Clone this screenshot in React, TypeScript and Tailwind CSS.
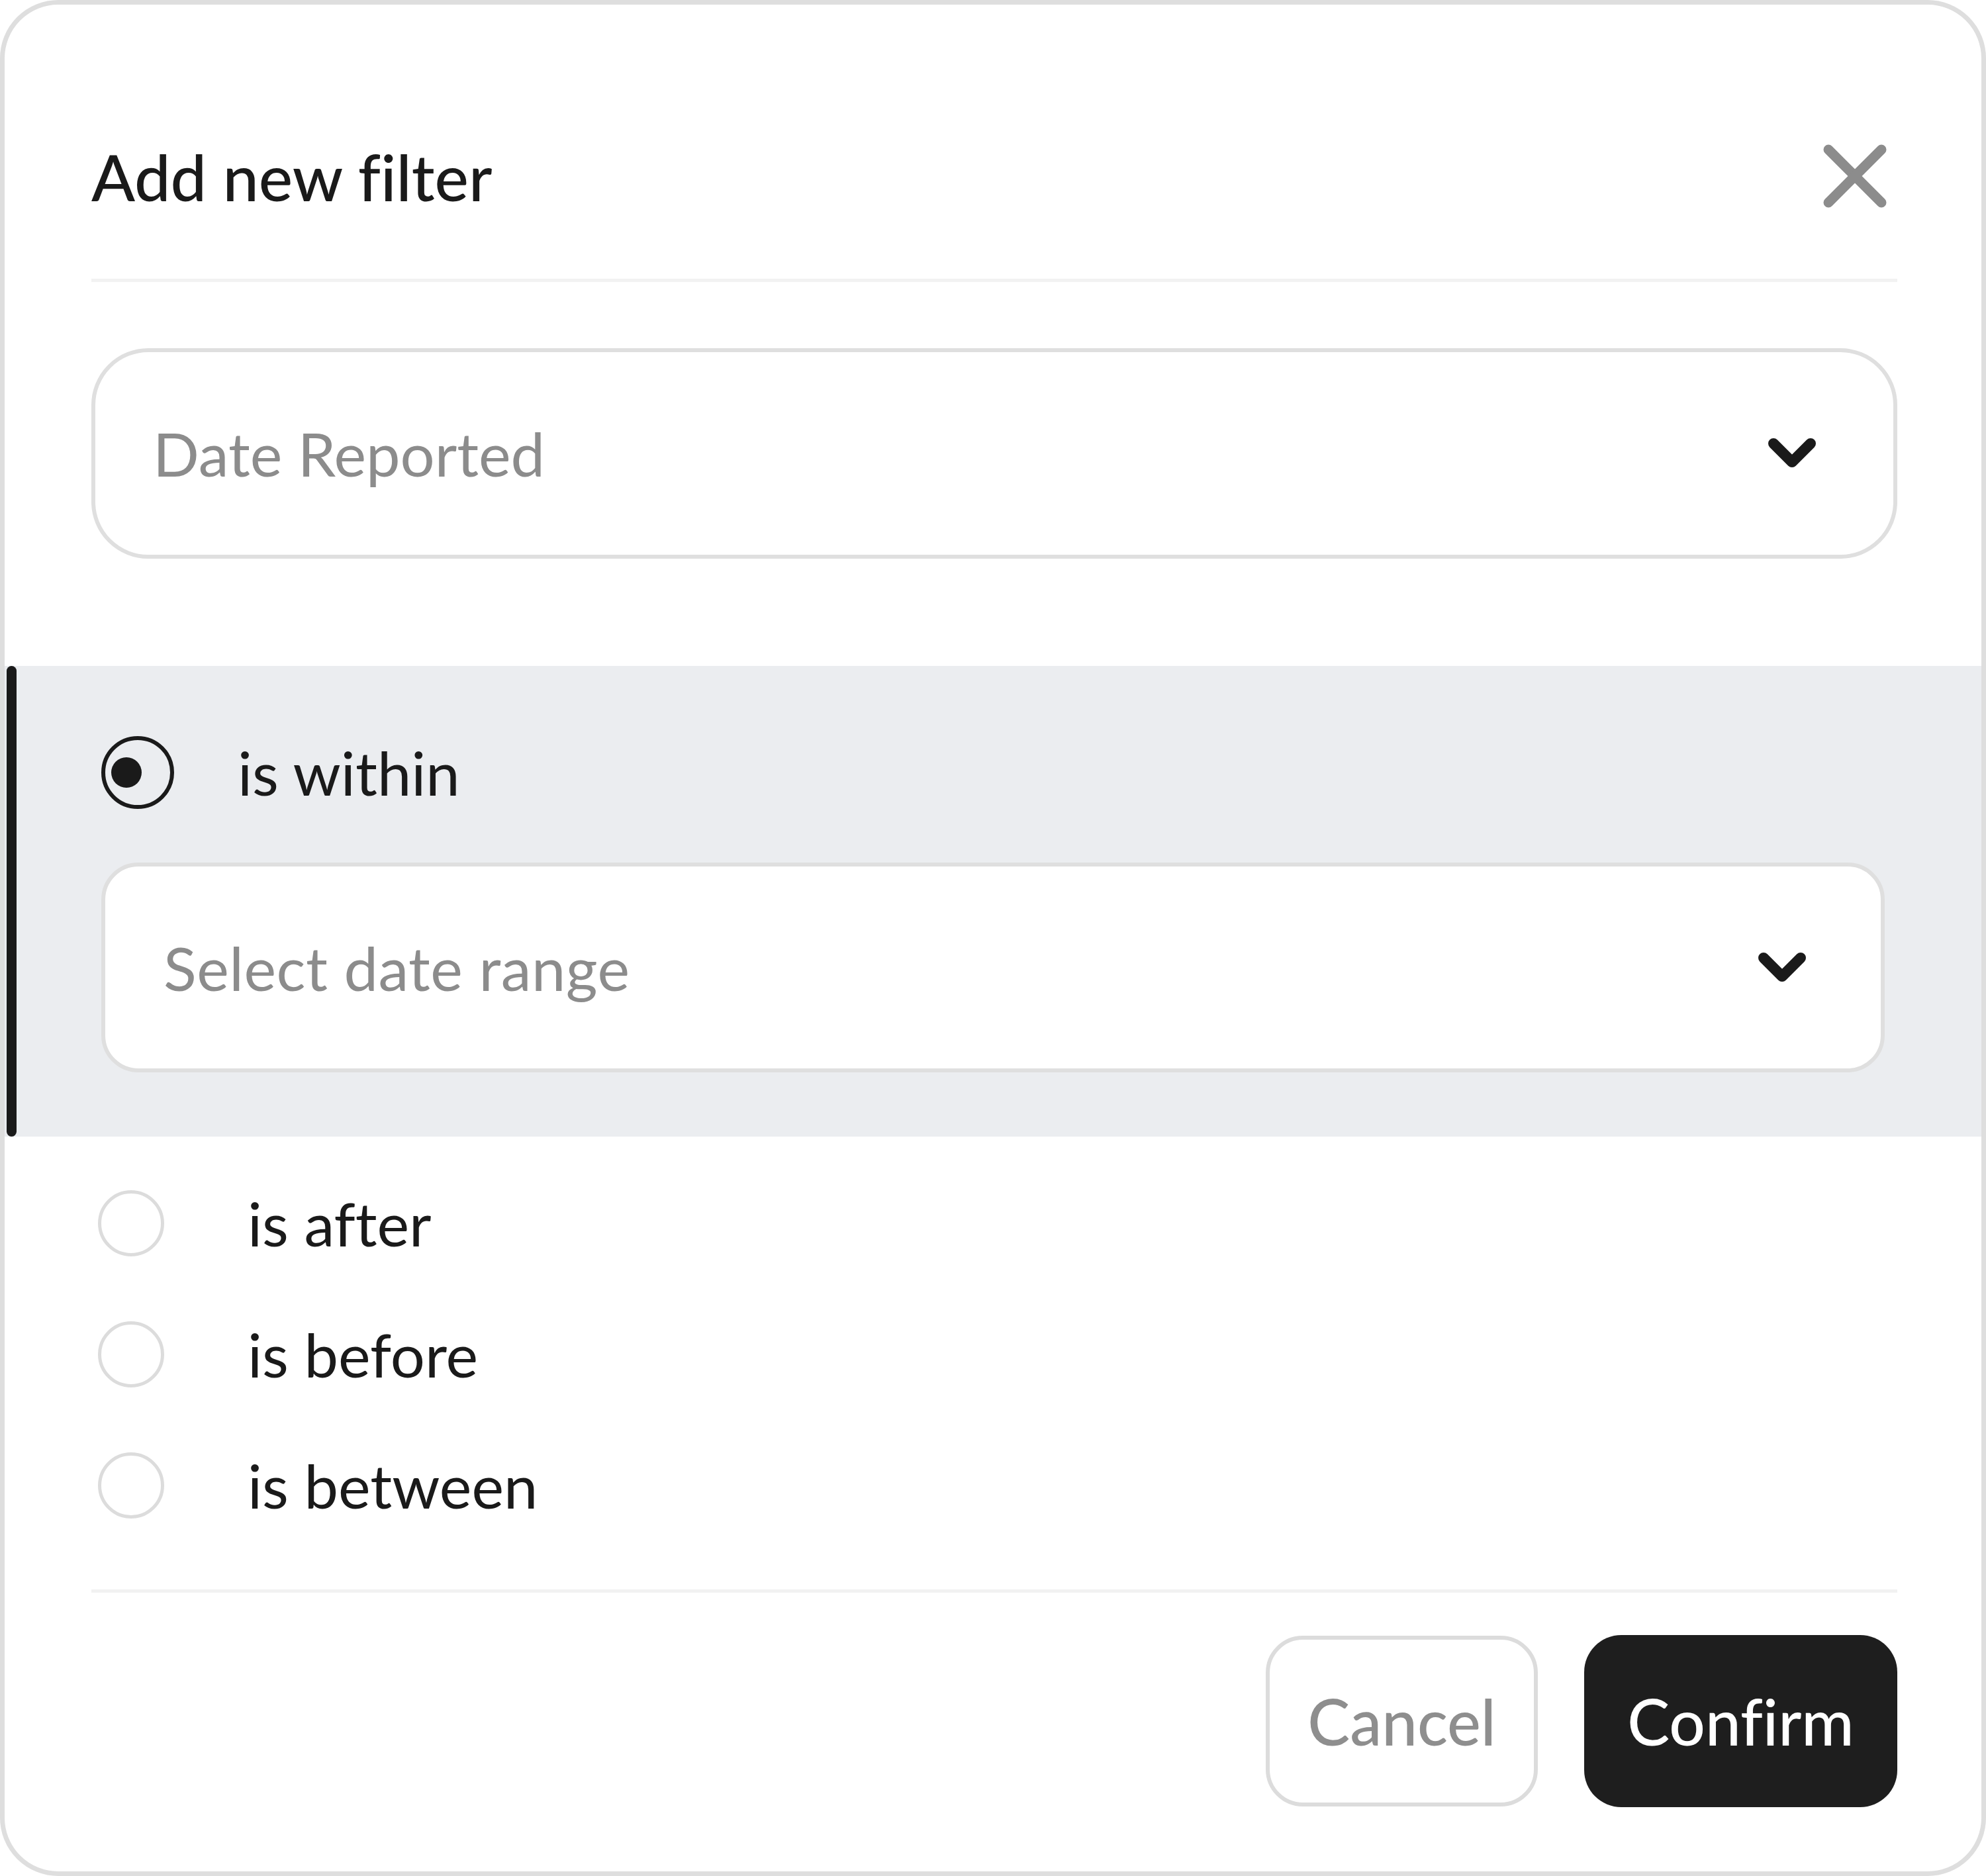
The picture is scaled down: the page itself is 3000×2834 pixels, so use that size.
import React from "react";

function Chevron() {
  return (
    <svg width="72" height="46" viewBox="0 0 72 46" fill="none" className="shrink-0">
      <polyline points="8,8 36,36 64,8" stroke="#1a1a1a" strokeWidth="16" strokeLinecap="round" strokeLinejoin="round" />
    </svg>
  );
}

function CloseIcon() {
  return (
    <svg width="96" height="96" viewBox="0 0 96 96" fill="none" className="shrink-0 mr-[16px]">
      <line x1="8" y1="8" x2="88" y2="88" stroke="#8c8c8c" strokeWidth="15" strokeLinecap="round" />
      <line x1="88" y1="8" x2="8" y2="88" stroke="#8c8c8c" strokeWidth="15" strokeLinecap="round" />
    </svg>
  );
}

function OffRadio({ label }: { label: string }) {
  return (
    <div className="h-[100px] flex items-center">
      <div className="w-[100px] h-[100px] rounded-full border-[5px] border-[#dcdcdc] bg-white shrink-0" />
      <span className="ml-[126px] text-[92px] leading-none text-[#1a1a1a]">{label}</span>
    </div>
  );
}

export default function App() {
  return (
    <div className="w-[3000px] h-[2834px] bg-white font-['Lato',sans-serif] [font-variant-ligatures:none]">
      <div className="w-full h-full border-[7px] border-[#dedede] rounded-[88px] bg-white overflow-hidden flex flex-col">
        <div className="pl-[131px] pr-[127px] pt-[209px]">
          <div className="h-[100px] flex items-center justify-between">
            <h1 className="text-[97px] leading-none font-medium text-[#1a1a1a]">Add new filter</h1>
            <CloseIcon />
          </div>
          <div className="mt-[105px] h-[5px] bg-[#f2f2f2]" />
          <div className="mt-[100px] h-[318px] border-[6px] border-[#dfdfdf] rounded-[86px] bg-white flex items-center justify-between pl-[87px] pr-[117px]">
            <span className="text-[92px] leading-none text-[#8c8c8c]">Date Reported</span>
            <Chevron />
          </div>
        </div>

        <div className="mt-[162px] h-[711px] bg-[#ebedf0] flex">
          <div className="ml-[3px] w-[15px] rounded-full bg-[#1a1a1a] shrink-0" />
          <div className="flex-1 pl-[128px] pr-[146px] pt-[106px]">
            <div className="h-[110px] flex items-center">
              <div className="w-[110px] h-[110px] rounded-full border-[6px] border-[#1a1a1a] shrink-0 flex items-center pl-[9px]">
                <div className="w-[46px] h-[46px] rounded-full bg-[#1a1a1a]" />
              </div>
              <span className="ml-[96px] text-[92px] leading-none text-[#1a1a1a]">is within</span>
            </div>
            <div className="mt-[81px] h-[317px] border-[6px] border-[#dfdfdf] rounded-[56px] bg-white flex items-center justify-between pl-[88px] pr-[113px]">
              <span className="text-[92px] leading-none text-[#8c8c8c] tracking-[0.5px]">Select date range</span>
              <Chevron />
            </div>
          </div>
        </div>

        <div className="pl-[141px] mt-[81px] flex flex-col gap-[98px]">
          <OffRadio label="is after" />
          <OffRadio label="is before" />
          <OffRadio label="is between" />
        </div>

        <div className="pl-[131px] pr-[127px]">
          <div className="mt-[107px] h-[5px] bg-[#f2f2f2]" />
          <div className="mt-[64px] flex justify-end items-center gap-[70px]">
            <button className="w-[411px] h-[258px] border-[6px] border-[#dcdcdc] rounded-[56px] bg-white text-[96px] leading-none font-medium text-[#8e8e8e] flex items-center justify-center">
              Cancel
            </button>
            <button className="w-[473px] h-[260px] rounded-[56px] bg-[#1e1e1e] text-[96px] leading-none font-medium text-white flex items-center justify-center">
              Confirm
            </button>
          </div>
        </div>
      </div>
    </div>
  );
}
